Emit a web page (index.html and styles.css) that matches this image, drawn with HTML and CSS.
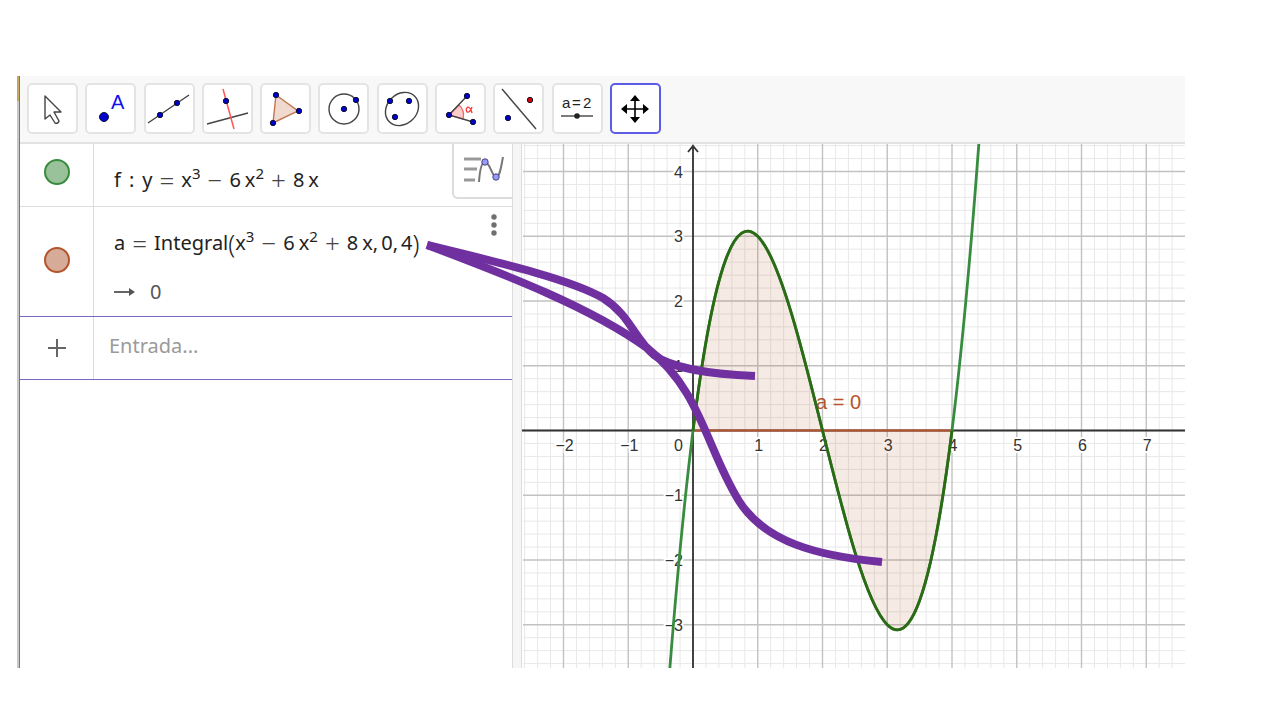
FILE: index.html
```html
<!DOCTYPE html>
<html lang="es">
<head>
    <meta charset="UTF-8">
    <meta name="viewport" content="width=device-width, initial-scale=1.0">
    <title>Integral de f entre 0 y 4</title>
    <link rel="stylesheet" href="styles.css">
</head>
<body>
<div class="app">
    <div class="edge"></div>
    <div class="window">
        <div class="toolbar">
            <div class="tools">
                <button class="tool" aria-label="Elige y mueve">
                    <svg viewBox="0 0 48 48"><path d="M16 11v23l5-4 5 8q3 1 4-2l-5-9h7z" fill="#fff" stroke="#444" stroke-width="1.4" stroke-linejoin="round"/></svg>
                </button>
                <button class="tool" aria-label="Punto">
                    <svg viewBox="0 0 48 48"><circle class="pt" cx="17" cy="32" r="4.5"/><text class="letter" x="24" y="24">A</text></svg>
                </button>
                <button class="tool" aria-label="Recta">
                    <svg viewBox="0 0 48 48"><path class="ln" d="M3 38L44 10"/><circle class="pt" cx="15" cy="30" r="2.7"/><circle class="pt" cx="32" cy="18" r="2.7"/></svg>
                </button>
                <button class="tool" aria-label="Perpendicular">
                    <svg viewBox="0 0 48 48"><path class="ln" d="M4 39L45 28"/><path d="M20 4L31 44" fill="none" stroke="#f55" stroke-width="1.5"/><circle class="pt" cx="23" cy="16" r="2.7"/></svg>
                </button>
                <button class="tool" aria-label="Polígono">
                    <svg viewBox="0 0 48 48"><path d="M14 10L36 26L11 38z" fill="#f0dad0" stroke="#bf7650" stroke-width="1.4"/><circle class="pt" cx="14" cy="10" r="2.7"/><circle class="pt" cx="37" cy="26" r="2.7"/><circle class="pt" cx="11" cy="38" r="2.7"/></svg>
                </button>
                <button class="tool" aria-label="Circunferencia">
                    <svg viewBox="0 0 48 48"><circle class="ln" cx="24" cy="24" r="15"/><circle class="pt" cx="24" cy="24" r="2.7"/><circle class="pt" cx="36" cy="15" r="2.7"/></svg>
                </button>
                <button class="tool" aria-label="Elipse">
                    <svg viewBox="0 0 48 48"><ellipse class="ln" cx="24" cy="24" rx="18" ry="15" transform="rotate(-45 24 24)"/><circle class="pt" cx="12" cy="16" r="2.7"/><circle class="pt" cx="31" cy="16" r="2.7"/><circle class="pt" cx="17" cy="32" r="2.7"/></svg>
                </button>
                <button class="tool" aria-label="Ángulo">
                    <svg viewBox="0 0 48 48"><path d="M12 30L22 20Q28 25 26 34z" fill="#fcc" stroke="#e66" stroke-width="1.2"/><path class="ln" d="M30 11L12 30L36 37"/><circle class="pt" cx="30" cy="11" r="2.7"/><circle class="pt" cx="12" cy="30" r="2.7"/><circle class="pt" cx="36" cy="37" r="2.7"/><path d="M35 22Q33 28 30 27Q28 24 31 22Q34 23 35 28" fill="none" stroke="#f33" stroke-width="1.3"/></svg>
                </button>
                <button class="tool" aria-label="Simetría axial">
                    <svg viewBox="0 0 48 48"><path class="ln" d="M7 4L41 44"/><circle class="pt" cx="13" cy="33" r="2.7"/><circle class="pt red" cx="35" cy="15" r="2.7"/></svg>
                </button>
                <button class="tool" aria-label="Deslizador">
                    <svg viewBox="0 0 48 48"><text class="slider-text" x="9" y="23">a</text><text class="slider-text" x="19" y="23">=</text><text class="slider-text" x="30" y="23">2</text><path class="ln" d="M8 31H40"/><circle cx="24" cy="31" r="2.8" fill="#222"/></svg>
                </button>
                <button class="tool active" aria-label="Desplaza vista gráfica">
                    <svg viewBox="0 0 48 48"><path d="M14 24H34M24 14V34" stroke="#000" stroke-width="1.6"/><path d="M24 10l5 6H19zM24 38l5-6H19zM10 24l6-5v10zM38 24l-6-5v10z"/></svg>
                </button>
            </div>
        </div>

        <div class="views">
            <div class="algebra">
                <div class="row first">
                    <div class="marker"><button class="dot green" aria-label="Mostrar f"></button></div>
                    <div class="formula"><span>f</span><span class="colon">:</span><span>y</span><span class="op">=</span><span>x<sup>3</sup></span><span class="op">−</span><span>6</span><span class="var">x<sup>2</sup></span><span class="op">+</span><span>8</span><span class="var">x</span></div>
                    <button class="style-toggle" aria-label="Vista algebraica">
                        <svg width="42" height="30" viewBox="0 0 42 30"><path d="M2 5H19M2 15H15M2 26H13" stroke="#999" stroke-width="3"/><path d="M17 28C18 13 20 8 23 8C28 8 30 23 34 23C38 23 39 13 41 3" fill="none" stroke="#777" stroke-width="2"/><circle cx="23" cy="8" r="3.2" fill="#99f" stroke="#447"/><circle cx="34" cy="23" r="3.2" fill="#99f" stroke="#447"/></svg>
                    </button>
                </div>
                <div class="row second">
                    <div class="marker"><button class="dot brown" aria-label="Mostrar a"></button></div>
                    <div class="lines">
                        <div class="formula"><span>a</span><span class="op">=</span><span>Integral</span><span class="paren">(</span><span>x<sup>3</sup></span><span class="op">−</span><span>6</span><span class="var">x<sup>2</sup></span><span class="op">+</span><span>8</span><span class="var">x</span><span class="comma">,</span><span>0</span><span class="comma">,</span><span>4</span><span class="paren">)</span></div>
                        <div class="result">
                            <svg width="21" height="10" viewBox="0 0 21 10"><path d="M0 5H17" stroke="#555" stroke-width="1.8"/><path d="M15 1l6 4-6 4z" fill="#555"/></svg>
                            <span>0</span>
                        </div>
                    </div>
                    <button class="more" aria-label="Más">
                        <svg width="6" height="22" viewBox="0 0 6 22"><g fill="#707070"><circle cx="3" cy="3" r="2.7"/><circle cx="3" cy="11" r="2.7"/><circle cx="3" cy="19" r="2.7"/></g></svg>
                    </button>
                </div>
                <div class="row entry">
                    <div class="marker">
                        <svg width="18" height="18" viewBox="0 0 18 18"><path d="M0 9H18M9 0V18" stroke="#666" stroke-width="2"/></svg>
                    </div>
                    <input type="text" placeholder="Entrada..." aria-label="Entrada">
                </div>
            </div>
            <div class="splitter"></div>
            <svg class="plot" id="plot"></svg>
        </div>
    </div>

    <!-- Flechas desde la integral hasta las dos regiones -->
    <svg class="pointers">
        <path d="M410 169C480 186 553 203 586 222C613 239 617 262 637 279C656 293 693 298 738 300"/>
        <path d="M410 169C490 199 575 232 630 272C684 314 689 372 722 425C748 466 800 480 865 486"/>
    </svg>
</div>
<script src="graph.js"></script>
</body>
</html>
```
FILE: styles.css
```css
:root {
    --purple: #7030a0;
    --line: #dcdcdc;
    --focus: #7468c4;
}

* {
    box-sizing: border-box;
}

body {
    margin: 0;
    min-height: 100vh;
    padding: 76px 95px 52px 17px;
    display: flex;
    background: #fff;
    font-family: "Noto Sans", "Open Sans", sans-serif;
    color: #222;
}

button {
    padding: 0;
    border: none;
    background: none;
    cursor: pointer;
}

.app {
    position: relative;
    flex: 1;
    min-width: 0;
    display: flex;
}

.edge {
    width: 3px;
    border-right: 1px solid #777;
    background: linear-gradient(#c9a75c 25px, #c8c8c8 25px);
}

.window {
    flex: 1;
    min-width: 0;
    display: flex;
    flex-direction: column;
}

.toolbar {
    padding: 7px 7px 8px;
    background: #f8f8f8;
    border-bottom: 2px solid #e2e2e2;
}

.tools {
    display: flex;
    justify-content: space-between;
    max-width: 634px;
}

.tool {
    width: 51px;
    height: 51px;
    border: 2px solid #e4e4e4;
    border-radius: 5px;
    background: #fff;
    display: flex;
    align-items: center;
    justify-content: center;
}

.tool.active {
    border: 2px solid #5c5ce6;
}

.tool svg {
    width: 48px;
    height: 48px;
    flex-shrink: 0;
}

.ln {
    fill: none;
    stroke: #444;
    stroke-width: 1.4;
}

.pt {
    fill: #00c;
    stroke: #113;
    stroke-width: 1;
}

.pt.red {
    fill: #d00;
}

.letter {
    font: 20px "Liberation Sans", sans-serif;
    fill: #11e;
}

.slider-text {
    font: 15px "Liberation Sans", sans-serif;
    fill: #222;
}

.views {
    flex: 1;
    display: flex;
}

.algebra {
    width: 493px;
    border-right: 1px solid var(--line);
}

.row {
    display: flex;
    position: relative;
    border-bottom: 1px solid var(--line);
}

.marker {
    width: 74px;
    flex-shrink: 0;
    display: flex;
    align-items: center;
    justify-content: center;
    border-right: 1px solid var(--line);
}

.first {
    height: 63px;
}

.first .marker {
    padding-bottom: 6px;
}

.second {
    height: 110px;
    border-bottom-color: var(--focus);
}

.second .marker {
    padding-bottom: 3px;
}

.entry {
    height: 63px;
    border-bottom-color: var(--focus);
}

.dot {
    width: 26px;
    height: 26px;
    border-radius: 50%;
}

.green {
    background: #99c29b;
    border: 2px solid #388c3f;
}

.brown {
    background: #d6ab98;
    border: 2px solid #b5532b;
}

.formula {
    display: flex;
    padding-left: 20px;
    font-size: 20px;
    line-height: 28px;
    white-space: nowrap;
}

.first .formula {
    padding-top: 22px;
}

.formula sup {
    font-size: 15px;
    line-height: 0;
    vertical-align: 8px;
}

.op {
    margin: 0 7px;
    font-size: 26px;
    font-weight: 300;
    color: #444;
}

.colon {
    margin: 0 8px;
}

.var {
    margin-left: 4px;
}

.comma {
    margin-right: 3px;
}

.paren {
    font-size: 25px;
    font-weight: 300;
}

.lines {
    padding-top: 22px;
}

.result {
    display: flex;
    align-items: center;
    gap: 15px;
    padding: 21px 0 0 20px;
    font-size: 20px;
    line-height: 28px;
    color: #555;
}

.style-toggle {
    position: absolute;
    top: 0;
    right: 0;
    width: 60px;
    height: 55px;
    border: 1px solid var(--line);
    border-width: 0 0 2px 2px;
    border-radius: 0 0 0 6px;
    background: #fff;
}

.more {
    position: absolute;
    top: 7px;
    right: 15px;
}

.entry input {
    flex: 1;
    min-width: 0;
    padding: 0 0 6px 15px;
    border: none;
    outline: none;
    background: none;
    font: 20px "Noto Sans", sans-serif;
}

.entry input::placeholder {
    color: #9a9a9a;
}

.splitter {
    width: 9px;
    background: #f6f6f6;
    border-right: 1px solid var(--line);
}

.plot {
    flex: 1;
    min-width: 0;
    font-family: "Liberation Sans", sans-serif;
    font-size: 16px;
}

.minor {
    stroke: #e8e8e8;
}

.major {
    stroke: #c2c2c2;
    stroke-width: 1.4;
}

.axis {
    fill: none;
    stroke: #333;
    stroke-width: 1.8;
}

.label {
    fill: #333;
    stroke: #fff;
    stroke-width: 4px;
    paint-order: stroke;
}

.area {
    fill: #b5532b;
    fill-opacity: 0.12;
}

.base {
    stroke: #b5532b;
    stroke-width: 1.8;
}

.curve {
    fill: none;
    stroke: #388c3f;
    stroke-width: 2.8;
}

.curve.inner {
    stroke: #2c6b16;
}

.area-label {
    fill: #b5532b;
    font-size: 20px;
}

.pointers {
    position: absolute;
    inset: 0;
    width: 100%;
    height: 100%;
    pointer-events: none;
}

.pointers path {
    fill: none;
    stroke: var(--purple);
    stroke-width: 8;
}
```
FILE: graph.js
```js
const plot = document.getElementById('plot');
const unit = 64.75;
const origin = { x: 171, y: 286.5 };

const px = x => origin.x + x * unit;
const py = y => origin.y - y * unit;
const f = x => x ** 3 - 6 * x ** 2 + 8 * x;
const df = x => 3 * x ** 2 - 12 * x + 8;

function add(name, attrs, text) {
    const el = document.createElementNS('http://www.w3.org/2000/svg', name);
    for (const key in attrs) el.setAttribute(key, attrs[key]);
    if (text !== undefined) el.textContent = text;
    plot.appendChild(el);
}

function line(cls, x1, y1, x2, y2) {
    add('line', { class: cls, x1, y1, x2, y2 });
}

// A cubic is exactly one Bézier segment
function cubic(a, b) {
    const h = (b - a) / 3;
    return `M${px(a)} ${py(f(a))}C${px(a + h)} ${py(f(a) + df(a) * h)} ` +
        `${px(b - h)} ${py(f(b) - df(b) * h)} ${px(b)} ${py(f(b))}`;
}

function draw() {
    const { width, height } = plot.getBoundingClientRect();
    plot.textContent = '';

    const left = Math.ceil(-origin.x / unit * 5);
    const right = Math.floor((width - origin.x) / unit * 5);
    const top = Math.floor(origin.y / unit * 5);
    const bottom = Math.ceil((origin.y - height) / unit * 5);

    for (const cls of ['minor', 'major']) {
        for (let i = left; i <= right; i++) {
            if ((i % 5 === 0) === (cls === 'major')) line(cls, px(i / 5), 0, px(i / 5), height);
        }
        for (let i = bottom; i <= top; i++) {
            if ((i % 5 === 0) === (cls === 'major')) line(cls, 1, py(i / 5), width, py(i / 5));
        }
    }

    const label = n => String(n).replace('-', '−');
    for (let i = Math.ceil(left / 5); i <= right / 5; i++) {
        if (i !== 0) add('text', { class: 'label', x: px(i) + 1, y: origin.y + 20, 'text-anchor': 'middle' }, label(i));
    }
    for (let i = Math.ceil(bottom / 5); i <= top / 5; i++) {
        const y = i === 0 ? origin.y + 20 : py(i) + 6;
        add('text', { class: 'label', x: origin.x - 10, y, 'text-anchor': 'end' }, label(i));
    }

    line('axis', 0, origin.y, width, origin.y);
    line('axis', origin.x, 2, origin.x, height);
    add('path', { class: 'axis', d: `M${origin.x - 5} 8L${origin.x} 2L${origin.x + 5} 8` });

    add('path', { class: 'area', d: cubic(0, 4) + 'z' });
    line('base', px(0), py(0), px(4), py(0));
    add('text', { class: 'area-label', x: px(1.9), y: py(0.33) }, 'a = 0');
    add('path', { class: 'curve', d: cubic(-1, 6) });
    add('path', { class: 'curve inner', d: cubic(0, 4) });
}

draw();
window.addEventListener('resize', draw);
```
